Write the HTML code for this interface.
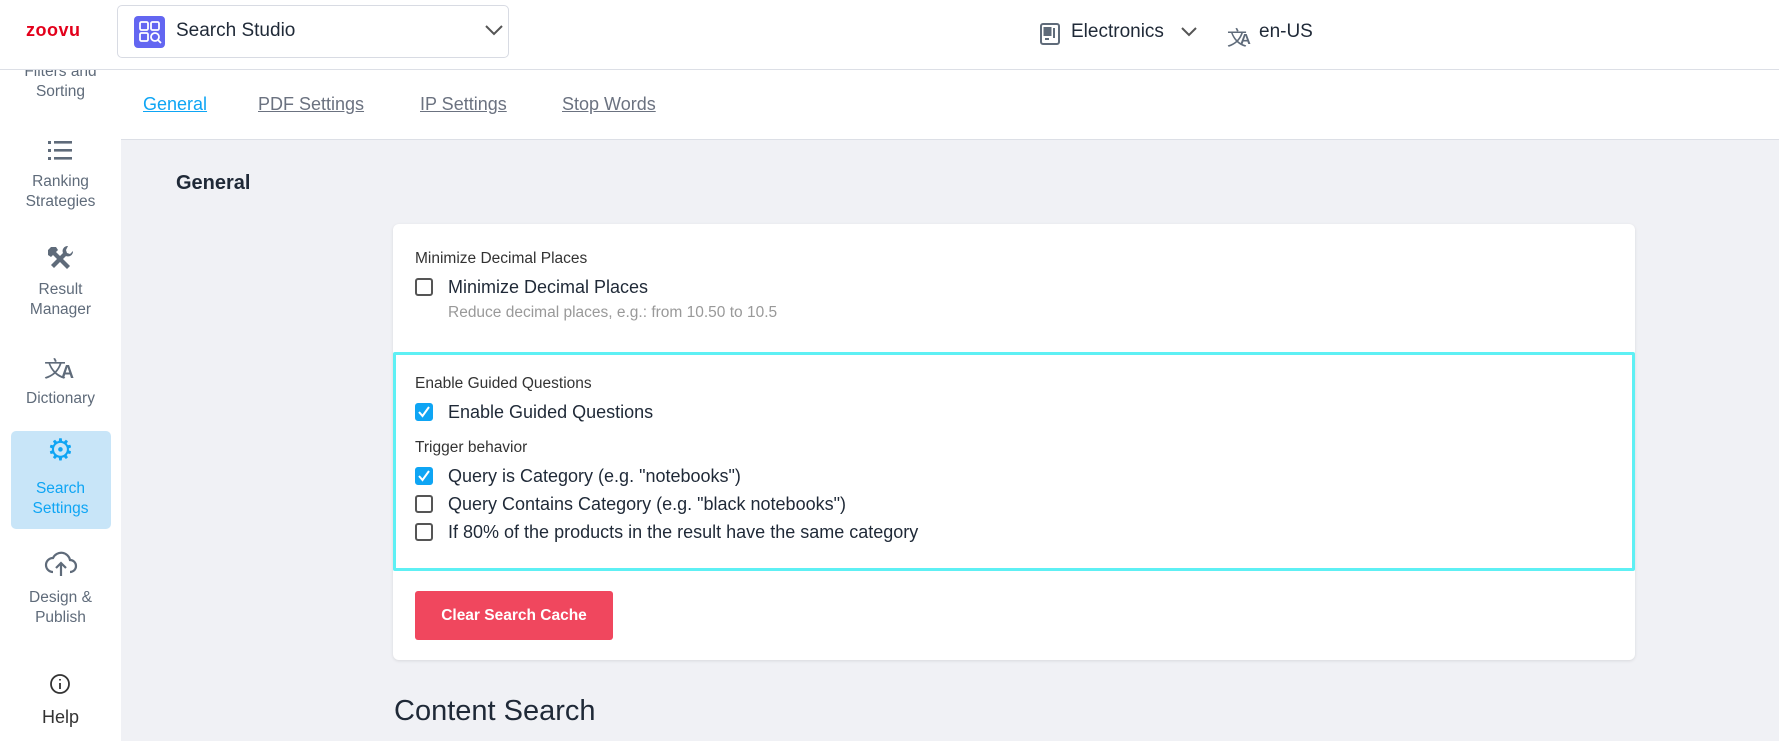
<!DOCTYPE html>
<html><head><meta charset="utf-8"><style>
*{margin:0;padding:0;box-sizing:border-box}
body{width:1779px;height:741px;overflow:hidden;background:#fff;font-family:"Liberation Sans",sans-serif;color:#1f2937;position:relative}
.abs{position:absolute;white-space:nowrap}
.side{color:#5f6b7a;font-size:15.5px;text-align:center;width:121px;left:0;line-height:20px}
.cb{position:absolute;width:18px;height:18px;border:2px solid #555;border-radius:3px;left:415px}
.cb.on{background:#0ea5f4;border-color:#0ea5f4}
.lbl{font-size:18px;color:#1f2937;left:448px}
.sm{font-size:15.5px;color:#333;left:415px}
.tab{font-size:18px;color:#6b7280;text-decoration:underline;top:94px}
</style></head><body>
<!-- sidebar (under header) -->
<div class="abs side" style="top:62px">Filters and<br>Sorting</div>
<!-- header -->
<div class="abs" style="left:0;top:0;width:1779px;height:70px;background:#fff;border-bottom:1px solid #dcdfe6"></div>
<div class="abs" style="left:26px;top:20px;font-weight:900;color:#e3001b;font-size:18px;letter-spacing:0.5px">zoovu</div>
<div class="abs" style="left:117px;top:5px;width:392px;height:53px;border:1px solid #d8dbe3;border-radius:5px"></div>
<div class="abs" style="left:134px;top:16px;width:31px;height:32px;background:#6366f1;border-radius:4px">
<svg width="31" height="32" viewBox="0 0 31 32" fill="none" stroke="#fff" stroke-width="1.8"><rect x="6" y="6" width="8" height="8" rx="1.5"/><rect x="17" y="6" width="8" height="8" rx="1.5"/><rect x="6" y="17" width="8" height="8" rx="1.5"/><circle cx="21" cy="21" r="4"/><path d="M24 24l3 3"/></svg></div>
<div class="abs" style="left:176px;top:20px;font-size:19px;color:#1f2937">Search Studio</div>
<svg class="abs" style="left:484px;top:24px" width="20" height="12" viewBox="0 0 20 12" fill="none" stroke="#555" stroke-width="2"><path d="M2 2l8 8 8-8"/></svg>
<svg class="abs" style="left:1039px;top:22px" width="22" height="24" viewBox="0 0 22 24" fill="none" stroke="#5f6b7a" stroke-width="2"><rect x="2" y="2" width="18" height="20" rx="2"/><rect x="5.5" y="6" width="6" height="7" fill="#5f6b7a"/><path d="M15 6v10M6 17h4"/></svg>
<div class="abs" style="left:1071px;top:21px;font-size:19px;color:#1f2937">Electronics</div>
<svg class="abs" style="left:1180px;top:26px" width="18" height="11" viewBox="0 0 18 11" fill="none" stroke="#555" stroke-width="2"><path d="M2 2l7 7 7-7"/></svg>
<div class="abs" style="left:1227px;top:22px;font-size:20px;color:#5f6b7a">文</div>
<div class="abs" style="left:1240px;top:31px;font-size:15px;color:#5f6b7a;font-weight:bold">A</div>
<div class="abs" style="left:1259px;top:21px;font-size:19px;color:#1f2937">en-US</div>
<!-- sidebar -->
<svg class="abs" style="left:46px;top:139px" width="28" height="24" viewBox="0 0 28 24" fill="#5f6b7a"><rect x="8" y="2" width="18" height="2.6"/><rect x="8" y="10" width="18" height="2.6"/><rect x="8" y="18" width="18" height="2.6"/><rect x="2" y="2" width="3" height="3"/><rect x="2" y="10" width="3" height="3"/><rect x="2" y="18" width="3" height="3"/></svg>
<div class="abs side" style="top:172px">Ranking<br>Strategies</div>
<svg class="abs" style="left:46px;top:244px" width="28" height="28" viewBox="0 0 28 28" fill="#5f6b7a"><path d="M5 3l5 0 2 3-2 2 14 14-3 3L7 11 5 13 2 11 2 6z"/><path d="M22 2a5 5 0 0 0-5 7L5 21l3 3 12-12a5 5 0 0 0 7-5l-3 3-3-1-1-3z"/></svg>
<div class="abs side" style="top:280px">Result<br>Manager</div>
<div class="abs" style="left:44px;top:352px;font-size:22px;color:#5f6b7a">文</div>
<div class="abs" style="left:61px;top:362px;font-size:18px;color:#5f6b7a;font-weight:bold">A</div>
<div class="abs side" style="top:389px">Dictionary</div>
<div class="abs" style="left:11px;top:431px;width:100px;height:98px;background:#c8e5f8;border-radius:5px"></div>
<div class="abs side" style="top:441px;font-size:30px;color:#0ea5f4">⚙</div>
<div class="abs side" style="top:479px;color:#0ea5f4">Search<br>Settings</div>
<svg class="abs" style="left:44px;top:550px" width="34" height="28" viewBox="0 0 34 28" fill="none" stroke="#5f6b7a" stroke-width="2.2"><path d="M9 22a7 7 0 0 1 0-14 9 9 0 0 1 17 2 6 6 0 0 1 0 12"/><path d="M17 26V14M12 18l5-5 5 5"/></svg>
<div class="abs side" style="top:588px">Design &amp;<br>Publish</div>
<svg class="abs" style="left:49px;top:673px" width="22" height="22" viewBox="0 0 22 22" fill="none" stroke="#333" stroke-width="1.8"><circle cx="11" cy="11" r="9"/><path d="M11 10v6M11 6v1.5"/></svg>
<div class="abs side" style="top:707px;font-size:18px;color:#333">Help</div>
<!-- tabs -->
<div class="abs tab" style="left:143px;color:#0ea5f4">General</div>
<div class="abs tab" style="left:258px">PDF Settings</div>
<div class="abs tab" style="left:420px">IP Settings</div>
<div class="abs tab" style="left:562px">Stop Words</div>
<!-- content -->
<div class="abs" style="left:121px;top:139px;width:1658px;height:602px;background:#f0f1f5;border-top:1px solid #dcdfe6"></div>
<div class="abs" style="left:176px;top:172px;font-size:20px;font-weight:bold;color:#1f2937">General</div>
<div class="abs" style="left:393px;top:224px;width:1242px;height:436px;background:#fff;border-radius:6px;box-shadow:0 1px 3px rgba(0,0,0,.1)"></div>
<div class="abs sm" style="top:250px">Minimize Decimal Places</div>
<div class="cb" style="top:278px"></div>
<div class="abs lbl" style="top:277px">Minimize Decimal Places</div>
<div class="abs" style="left:448px;top:304px;font-size:15.5px;color:#999">Reduce decimal places, e.g.: from 10.50 to 10.5</div>
<div class="abs" style="left:393px;top:352px;width:1242px;height:219px;border:3px solid #5ef0f4;border-radius:2px"></div>
<div class="abs sm" style="top:375px">Enable Guided Questions</div>
<div class="cb on" style="top:403px"><svg width="14" height="14" viewBox="0 0 14 14" fill="none" stroke="#fff" stroke-width="2"><path d="M2 7l3.5 4L12 2"/></svg></div>
<div class="abs lbl" style="top:402px">Enable Guided Questions</div>
<div class="abs sm" style="top:439px">Trigger behavior</div>
<div class="cb on" style="top:467px"><svg width="14" height="14" viewBox="0 0 14 14" fill="none" stroke="#fff" stroke-width="2"><path d="M2 7l3.5 4L12 2"/></svg></div>
<div class="abs lbl" style="top:466px">Query is Category (e.g. "notebooks")</div>
<div class="cb" style="top:495px"></div>
<div class="abs lbl" style="top:494px">Query Contains Category (e.g. "black notebooks")</div>
<div class="cb" style="top:523px"></div>
<div class="abs lbl" style="top:522px">If 80% of the products in the result have the same category</div>
<div class="abs" style="left:415px;top:591px;width:198px;height:49px;background:#f0475e;border-radius:3px;color:#fff;font-weight:bold;font-size:15.5px;text-align:center;line-height:49px">Clear Search Cache</div>
<div class="abs" style="left:394px;top:695px;font-size:29px;color:#1f2937">Content Search</div>
</body></html>
